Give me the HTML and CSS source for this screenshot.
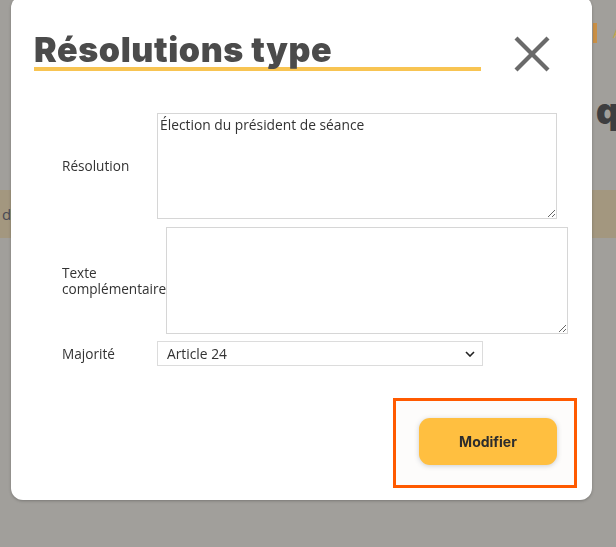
FILE: index.html
```html
<!DOCTYPE html>
<html lang="fr">
  <head>
    <meta charset="UTF-8" />
    <meta name="viewport" content="width=device-width, initial-scale=1.0" />
    <title>Résolutions type</title>
    <link rel="stylesheet" href="styles.css">
  </head>
  <body>
    <div class="page">
      <div class="page-header">
        <span class="header-btn">Aa</span>
      </div>
      <h1 class="page-title">questions</h1>
      <div class="page-band">dates</div>
    </div>

    <div class="modal">
      <div class="modal-header">
        <h2 class="modal-title">Résolutions type</h2>
        <button class="close-btn" type="button">
          <svg width="36" height="36" viewBox="0 0 36 36">
            <line x1="2" y1="2" x2="34" y2="34" />
            <line x1="34" y1="2" x2="2" y2="34" />
          </svg>
        </button>
      </div>

      <form class="modal-form">
        <div class="form-row">
          <label class="form-label" for="resolution">Résolution</label>
          <textarea id="resolution" class="form-area">Élection du président de séance</textarea>
        </div>
        <div class="form-row form-row-tight">
          <label class="form-label" for="texte">Texte complémentaire</label>
          <textarea id="texte" class="form-area form-area-wide"></textarea>
        </div>
        <div class="form-row">
          <label class="form-label" for="majorite">Majorité</label>
          <div class="select-wrap">
            <select id="majorite" class="form-select">
              <option>Article 24</option>
              <option>Article 25</option>
              <option>Article 26</option>
            </select>
            <svg class="select-arrow" width="10" height="6" viewBox="0 0 10 6">
              <polyline points="1,1 5,5 9,1" />
            </svg>
          </div>
        </div>
      </form>

      <div class="modal-footer">
        <div class="submit-box">
          <button class="submit-btn" type="button">Modifier</button>
        </div>
      </div>
    </div>
  </body>
</html>
```

FILE: styles.css
```css
html,
body {
  margin: 0;
  height: 100%;
  overflow: hidden;
}

body {
  background-color: #a19f9b;
  font-family: "Open Sans", "Liberation Sans", sans-serif;
  color: #333;
}

/* page behind the overlay */
.page-header {
  height: 60px;
  padding-left: 593px;
  padding-top: 21px;
  box-sizing: border-box;
}

.header-btn {
  display: inline-block;
  height: 20px;
  border-left: 4px solid #c98f45;
  padding-left: 16px;
  color: #c7a84b;
  font-size: 14px;
  line-height: 20px;
}

.page-title {
  margin: 31px 0 0 596px;
  font-family: "Inter", sans-serif;
  font-weight: 900;
  font-size: 36px;
  line-height: 40px;
  color: #3e3e40;
}

.page-band {
  margin-top: 59px;
  height: 48px;
  padding-left: 2px;
  background-color: #a3977f;
  color: #4a4a55;
  font-size: 15px;
  line-height: 48px;
}

/* modal */
.modal {
  position: fixed;
  left: 11px;
  top: -4px;
  width: 581px;
  box-sizing: border-box;
  padding: 37px 15px 12px 23px;
  background-color: #fff;
  border-radius: 12px;
  box-shadow: 0 1px 3px rgba(0, 0, 0, 0.25);
}

.modal-header {
  display: flex;
  align-items: flex-start;
}

.modal-title {
  width: 447px;
  margin: 0;
  font-family: "Inter", sans-serif;
  font-weight: 900;
  font-size: 34px;
  line-height: 34px;
  letter-spacing: 0.6px;
  color: #4b4b4b;
  border-bottom: 4px solid #f8c452;
}

.close-btn {
  margin: 3px 0 0 33px;
  padding: 0;
  border: none;
  background: none;
  cursor: pointer;
  line-height: 0;
}

.close-btn line {
  stroke: #6a6a6a;
  stroke-width: 4.2;
}

.modal-form {
  margin-top: 41px;
  padding-left: 28px;
}

.form-row {
  display: flex;
  align-items: center;
  margin-bottom: 8px;
}

.form-row-tight {
  margin-bottom: 7px;
}

.form-row:last-child {
  margin-bottom: 0;
}

.form-label {
  flex: 0 0 95px;
  font-size: 13.6px;
  line-height: 16px;
  color: #333;
}

.form-area {
  width: 400px;
  height: 106px;
  box-sizing: border-box;
  padding: 1px 2px 2px;
  border: 1px solid #d6d6d6;
  font-family: "Open Sans", "Liberation Sans", sans-serif;
  font-size: 13.8px;
  color: #333;
  outline: none;
}

.form-area-wide {
  width: 402px;
  height: 107px;
}

.select-wrap {
  position: relative;
}

.form-select {
  display: block;
  width: 326px;
  height: 25px;
  box-sizing: border-box;
  padding: 0 0 0 9px;
  border: 1px solid #dcdcdc;
  border-radius: 0;
  background-color: #fff;
  appearance: none;
  font-family: "Open Sans", "Liberation Sans", sans-serif;
  font-size: 13.8px;
  color: #333;
  outline: none;
}

.select-arrow {
  position: absolute;
  right: 8px;
  top: 10px;
  pointer-events: none;
}

.select-arrow polyline {
  fill: none;
  stroke: #222;
  stroke-width: 1.6;
}

.modal-footer {
  display: flex;
  justify-content: flex-end;
  margin-top: 32px;
}

.submit-box {
  padding: 17px 17px 20px 23px;
  border: 3px solid #ff5a00;
  background-color: #fdfcfb;
}

.submit-btn {
  display: block;
  width: 138px;
  height: 47px;
  border: none;
  border-radius: 11px;
  background-color: #ffbf40;
  box-shadow: 0 1px 5px rgba(60, 70, 90, 0.25);
  font-family: "Inter", sans-serif;
  font-weight: 700;
  font-size: 14px;
  color: #2d2d2d;
  cursor: pointer;
}
```
